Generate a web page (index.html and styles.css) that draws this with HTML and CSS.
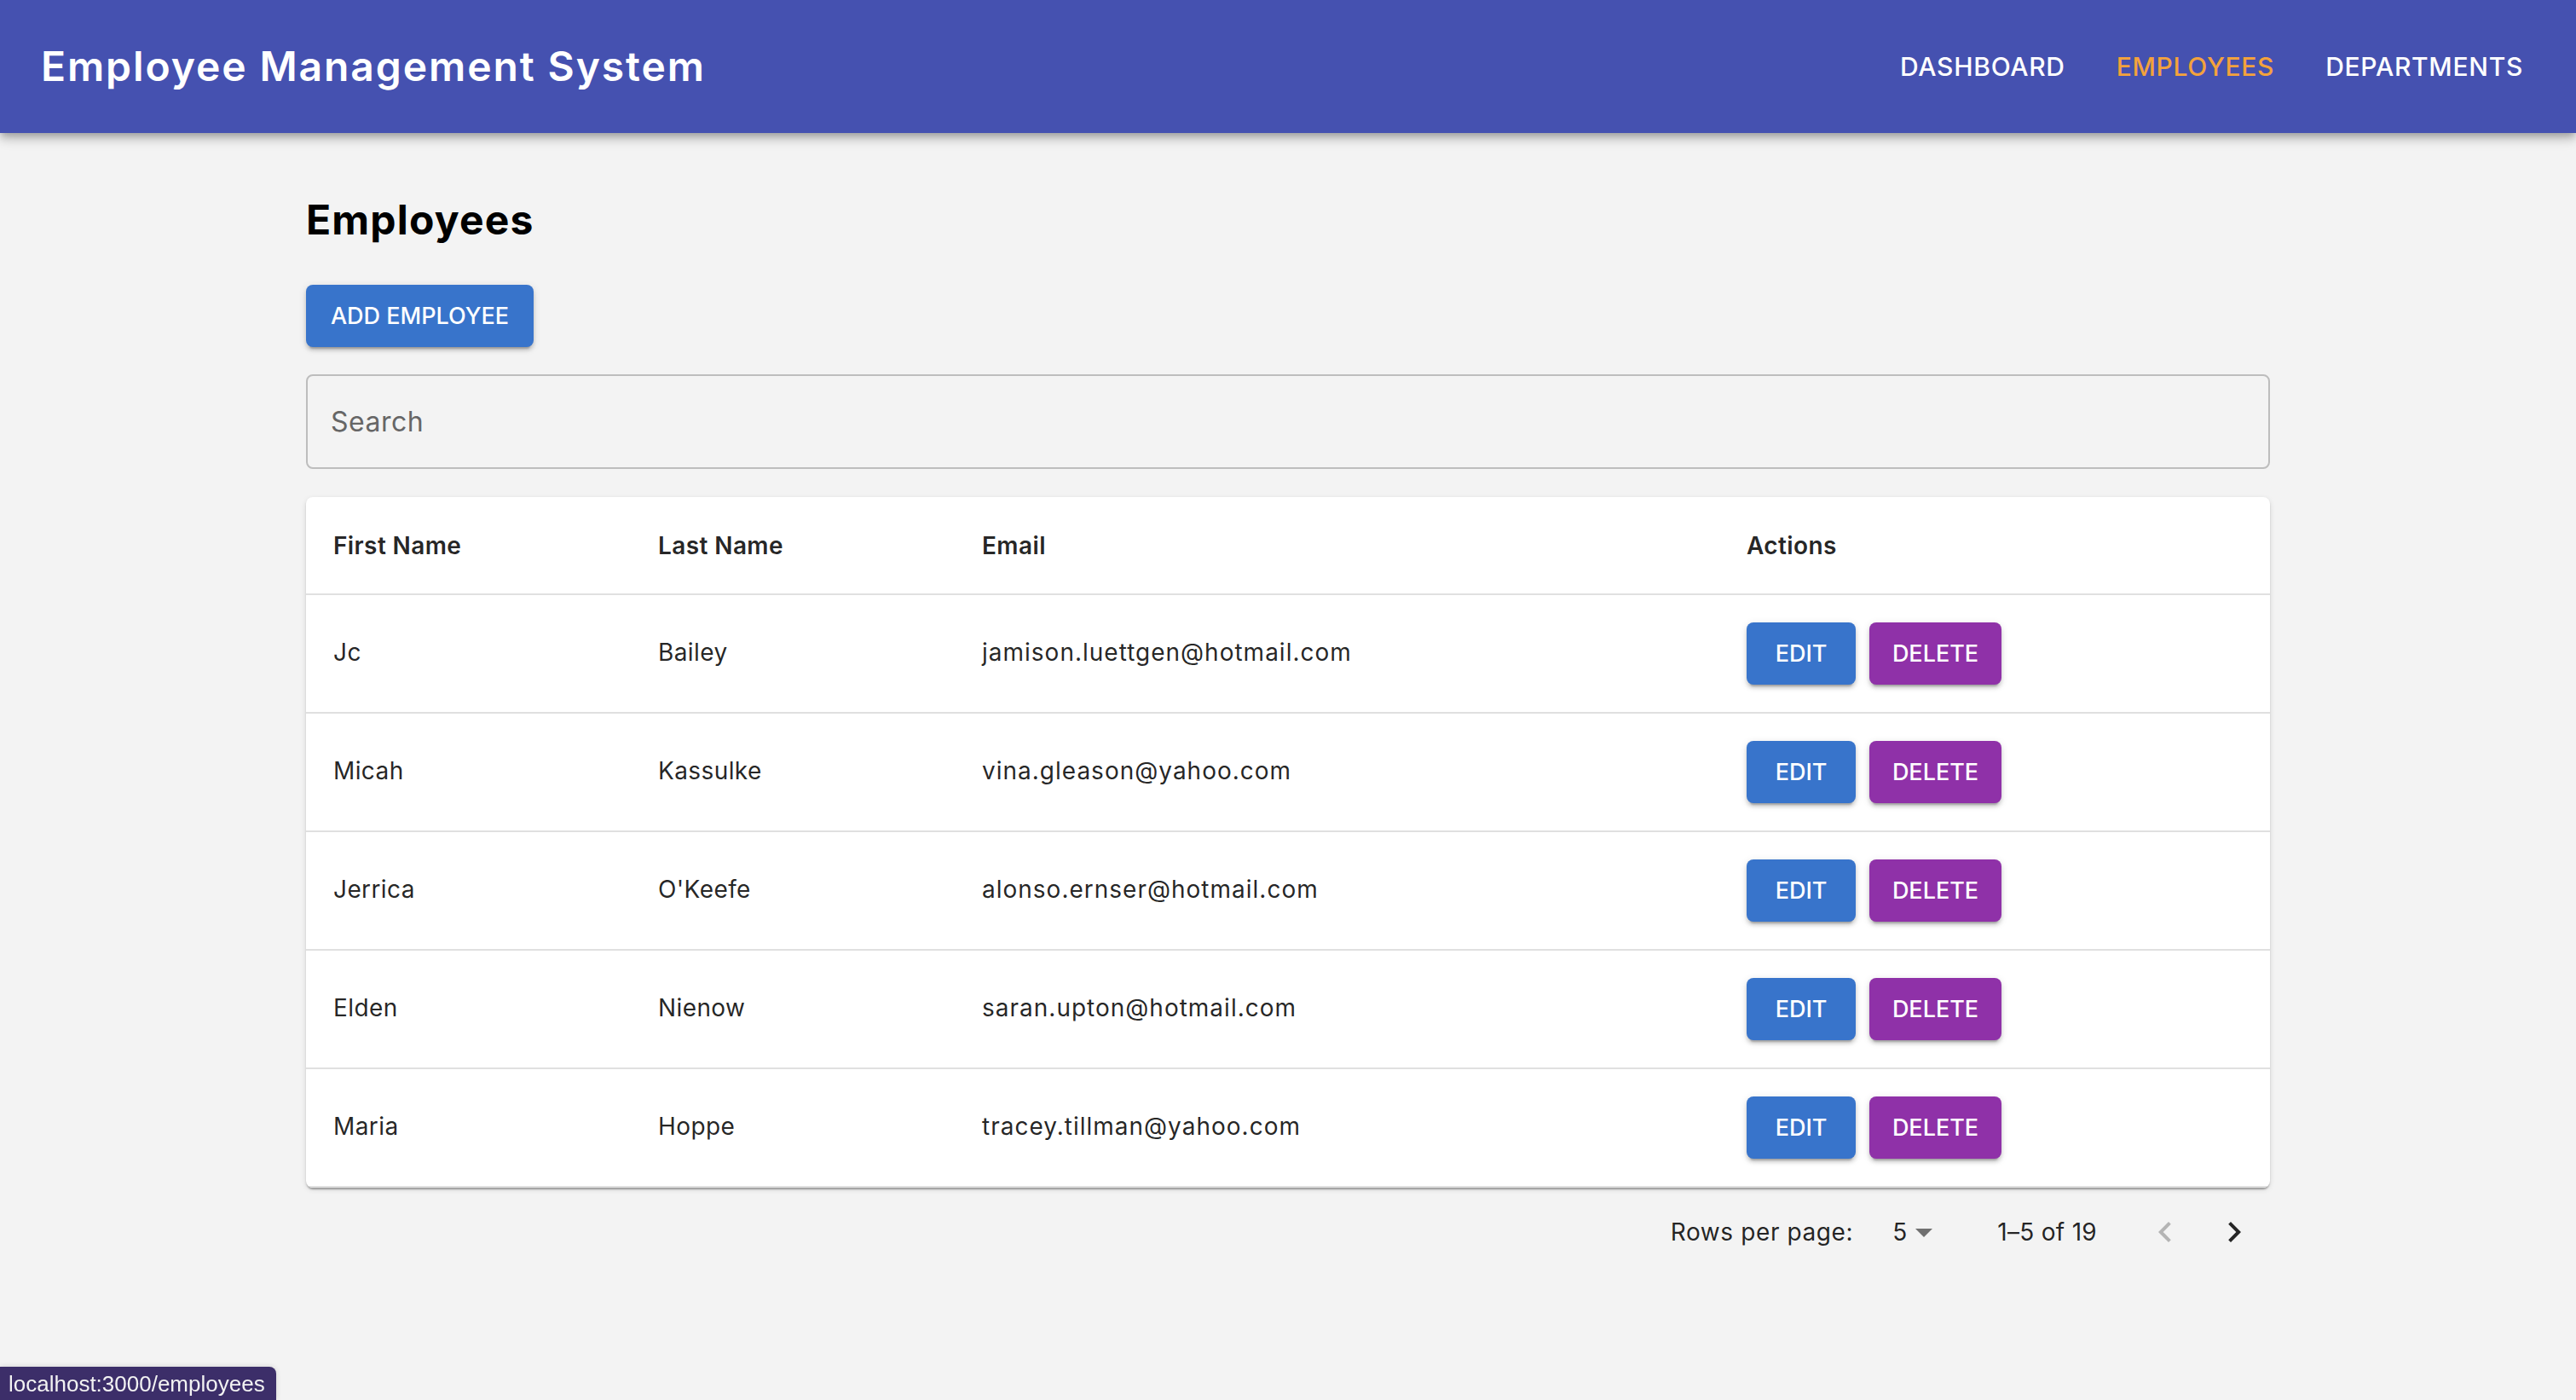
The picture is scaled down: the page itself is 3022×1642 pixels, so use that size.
FILE: index.html
```html
<!DOCTYPE html>
<html lang="en">
<head>
<meta charset="utf-8">
<title>Employee Management System</title>
<link rel="stylesheet" href="styles.css">
</head>
<body>
<header class="appbar">
  <div class="brand">Employee Management System</div>
  <nav class="nav">
    <a class="nav-link">DASHBOARD</a>
    <a class="nav-link active">EMPLOYEES</a>
    <a class="nav-link">DEPARTMENTS</a>
  </nav>
</header>

<main class="container">
  <h1 class="page-title">Employees</h1>
  <button class="btn btn-primary btn-add">ADD EMPLOYEE</button>
  <div class="search">
    <span class="search-placeholder">Search</span>
  </div>

  <div class="paper">
    <table class="table">
      <colgroup>
        <col class="c1"><col class="c2"><col class="c3"><col class="c4">
      </colgroup>
      <thead>
        <tr><th>First Name</th><th>Last Name</th><th>Email</th><th>Actions</th></tr>
      </thead>
      <tbody>
        <tr><td>Jc</td><td>Bailey</td><td>jamison.luettgen@hotmail.com</td><td><div class="actions"><button class="btn btn-primary btn-edit">EDIT</button><button class="btn btn-secondary btn-delete">DELETE</button></div></td></tr>
        <tr><td>Micah</td><td>Kassulke</td><td>vina.gleason@yahoo.com</td><td><div class="actions"><button class="btn btn-primary btn-edit">EDIT</button><button class="btn btn-secondary btn-delete">DELETE</button></div></td></tr>
        <tr><td>Jerrica</td><td>O'Keefe</td><td>alonso.ernser@hotmail.com</td><td><div class="actions"><button class="btn btn-primary btn-edit">EDIT</button><button class="btn btn-secondary btn-delete">DELETE</button></div></td></tr>
        <tr><td>Elden</td><td>Nienow</td><td>saran.upton@hotmail.com</td><td><div class="actions"><button class="btn btn-primary btn-edit">EDIT</button><button class="btn btn-secondary btn-delete">DELETE</button></div></td></tr>
        <tr><td>Maria</td><td>Hoppe</td><td>tracey.tillman@yahoo.com</td><td><div class="actions"><button class="btn btn-primary btn-edit">EDIT</button><button class="btn btn-secondary btn-delete">DELETE</button></div></td></tr>
      </tbody>
    </table>
  </div>

  <div class="pagination">
    <span class="pg-label">Rows per page:</span>
    <span class="pg-select">
      <span class="pg-value">5</span>
      <svg class="pg-drop" viewBox="0 0 24 24" width="48" height="48"><path d="M7 10l5 5 5-5z"/></svg>
    </span>
    <span class="pg-range">1–5 of 19</span>
    <span class="pg-btn pg-prev disabled">
      <svg viewBox="0 0 24 24" width="48" height="48"><path d="M15.41 16.59 10.83 12l4.58-4.59L14 6l-6 6 6 6 1.41-1.41z"/></svg>
    </span>
    <span class="pg-btn pg-next">
      <svg viewBox="0 0 24 24" width="48" height="48"><path d="M8.59 16.59 13.17 12 8.59 7.41 10 6l6 6-6 6-1.41-1.41z"/></svg>
    </span>
  </div>
</main>

<div class="statusbar">localhost:3000/employees</div>
</body>
</html>
```

FILE: styles.css
```css
* { box-sizing: border-box; }

html, body {
  margin: 0;
  padding: 0;
}

body {
  background: #f3f3f3;
  font-family: "Inter", "Noto Sans", "Liberation Sans", sans-serif;
  color: rgba(0, 0, 0, 0.87);
  min-height: 1642px;
}

.appbar {
  height: 156px;
  background: #4551b0;
  display: flex;
  align-items: center;
  justify-content: space-between;
  padding: 0 48px;
  box-shadow: 0 4px 8px -2px rgba(0,0,0,0.2), 0 8px 10px 0 rgba(0,0,0,0.14), 0 2px 20px 0 rgba(0,0,0,0.12);
  position: relative;
  z-index: 2;
}

.brand {
  color: #fff;
  font-size: 48px;
  font-weight: 600;
  letter-spacing: 1.9px;
  line-height: 1;
}

.nav {
  display: flex;
  align-items: center;
  gap: 28px;
  margin-right: -2px;
}

.nav-link {
  color: #fff;
  font-size: 30px;
  font-weight: 500;
  padding: 12px 16px;
  letter-spacing: 0.7px;
  line-height: 1.5;
}

.nav-link.active {
  color: #f3a23c;
}

.container {
  width: 2304px;
  margin: 0 auto;
  padding-top: 70px;
}

.page-title {
  margin: 0;
  font-size: 48px;
  font-weight: 700;
  line-height: 64px;
  color: #000;
  letter-spacing: 1.2px;
}

.btn {
  font-family: inherit;
  border: none;
  border-radius: 8px;
  color: #fff;
  font-size: 27px;
  font-weight: 500;
  letter-spacing: 0;
  height: 73px;
  padding: 0;
  white-space: nowrap;
  box-shadow: 0 6px 2px -4px rgba(0,0,0,0.2), 0 4px 4px 0 rgba(0,0,0,0.14), 0 2px 10px 0 rgba(0,0,0,0.12);
  cursor: pointer;
  display: inline-flex;
  align-items: center;
  justify-content: center;
}

.btn-primary { background: #3874cb; }
.btn-secondary { background: #8f31a8; }

.btn-add {
  margin-top: 44px;
  width: 267px;
}

.btn-edit { width: 128px; }
.btn-delete { width: 155px; }

.search {
  margin-top: 32px;
  height: 111px;
  border: 2px solid #bdbdbd;
  border-radius: 8px;
  display: flex;
  align-items: center;
  padding: 0 27px;
}

.search-placeholder {
  font-size: 32px;
  color: #666;
  letter-spacing: 0.5px;
}

.paper {
  margin-top: 33px;
  background: #fff;
  border-radius: 8px;
  box-shadow: 0 4px 2px -2px rgba(0,0,0,0.2), 0 2px 2px 0 rgba(0,0,0,0.14), 0 2px 6px 0 rgba(0,0,0,0.12);
  overflow: hidden;
}

.table {
  width: 100%;
  border-collapse: collapse;
  table-layout: fixed;
}

.c1 { width: 381px; }
.c2 { width: 380px; }
.c3 { width: 897px; }
.c4 { width: auto; }

.table th,
.table td {
  text-align: left;
  padding: 0 32px;
  font-size: 28px;
  border-bottom: 2px solid #e0e0e0;
  letter-spacing: 0.4px;
}

.table th {
  height: 114px;
  font-weight: 600;
  color: rgba(0,0,0,0.87);
}

.table td {
  height: 139px;
  font-weight: 400;
  padding-bottom: 3px;
}

.table td:nth-child(3) {
  letter-spacing: 1px;
}

.actions {
  display: flex;
  gap: 16px;
  margin-top: 3px;
}

.pagination {
  height: 104px;
  display: flex;
  align-items: center;
  justify-content: flex-end;
  font-size: 28px;
  color: rgba(0,0,0,0.87);
  padding-right: 2px;
}

.pg-label { letter-spacing: 0.6px; }

.pg-select {
  display: flex;
  align-items: center;
  margin-left: 46px;
  margin-right: 62px;
}

.pg-value { margin-right: -4px; }

.pg-drop { fill: rgba(0,0,0,0.54); }

.pg-range { letter-spacing: 0.3px; }

.pg-btn {
  width: 80px;
  height: 80px;
  display: flex;
  align-items: center;
  justify-content: center;
  fill: rgba(0,0,0,0.85);
}

.pg-prev {
  fill: rgba(0,0,0,0.26);
  margin-left: 40px;
  margin-right: 1px;
}

.statusbar {
  position: fixed;
  left: 0;
  bottom: 0;
  height: 39px;
  width: 324px;
  background: #3c2e69;
  color: #f2f2f2;
  font-family: "Liberation Sans", "Helvetica", sans-serif;
  font-size: 26px;
  line-height: 40px;
  padding-left: 10px;
  border-top-right-radius: 8px;
  box-shadow: 0 0 6px rgba(0,0,0,0.15);
  white-space: nowrap;
}
```
